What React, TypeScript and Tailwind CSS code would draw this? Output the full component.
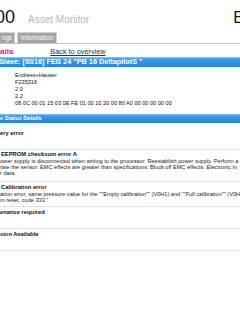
import React from 'react';

const FONT = { fontFamily: '"Liberation Sans", Arial, sans-serif' };

const deviceRows = [
  'Endress+Hauser',
  'F235316',
  '2.0',
  '2.2',
  '08 0C 00 01 15 03 0E FE 01 00 10 20 00 80 A0 00 00 00 00 00',
];

type StatusItem = {
  title: string;
  lines: string[];
  className: string;
};

const statusItems: StatusItem[] = [
  { title: 'ery error', lines: [], className: 'h-[27px] pt-[7px]' },
  {
    title: 'EEPROM checksum error A',
    lines: [
      'ower supply is disconnected when writing to the processor: Reestablish power supply. Perform a',
      'rate the sensor. EMC effects are greater than specifications: Block off EMC effects. Electronic in',
      'r data.',
    ],
    className: 'h-[32px] pt-[1px] pl-[1px]',
  },
  {
    title: 'Calibration error',
    lines: [
      'ation error, same pressure value for the ""Empty calibration"" (V0H1) and ""Full calibration"" (V0H',
      'm reset, code 333."',
    ],
    className: 'h-[25px] pt-[2px] pl-[1px]',
  },
  { title: 'enance required', lines: [], className: 'h-[22px] pt-[2px]' },
  { title: 'sion Available', lines: [], className: 'h-[22px] pt-[2px]' },
];

const BlueBar: React.FC<{ className: string; children: React.ReactNode }> = ({ className, children }) => (
  <div
    className={`whitespace-nowrap font-bold text-white bg-[linear-gradient(to_bottom,#84c4f4_0%,#3c98e7_25%,#2585da_100%)] ${className}`}
  >
    {children}
  </div>
);

export default function App() {
  return (
    <div className="w-[240px] h-[321px] overflow-hidden bg-white text-black" style={FONT}>
      {/* header, page is scrolled so the edges are cut */}
      <div className="h-[32px] flex items-baseline pt-[8px]">
        <span className="text-[18px] leading-[18px] -ml-[5px] text-[#111]">00</span>
        <span className="ml-[13px] text-[10px] leading-[10px] text-[#aeb7c6]">Asset Monitor</span>
        <span className="ml-auto -mr-[4px] text-[16px] leading-[16px] text-[#111]">E</span>
      </div>

      {/* tabs */}
      <div className="h-[12px] flex items-end gap-[2px] border-b border-[#c6c6c6]">
        <div className="h-[11px] w-[15px] bg-[#a4a4a4] border border-l-0 border-b-0 border-[#d2d2d2] text-white text-[6.5px] leading-[10px] text-right pr-[2px] whitespace-nowrap">
          ngs
        </div>
        <div className="h-[11px] w-[40px] bg-[#a4a4a4] border border-b-0 border-[#d2d2d2] text-white text-[6.5px] leading-[10px] text-center whitespace-nowrap">
          Information
        </div>
      </div>

      {/* nav row */}
      <div className="h-[13px] flex items-baseline pt-[1px] whitespace-nowrap">
        <span className="text-[8px] leading-[13px] font-bold text-[#d4168e]">ails</span>
        <span className="ml-[37px] text-[7.3px] leading-[13px] text-[#333] underline">Back to overview</span>
      </div>

      <BlueBar className="h-[10px] text-[7.3px] leading-[10px] -ml-[1px]">
        Slave: [S016] FEB 24 "PB 16 DeltapilotS "
      </BlueBar>

      {/* device values */}
      <div className="pt-[4.5px] pl-[15px] h-[47px]">
        {deviceRows.map((v) => (
          <div key={v} className="text-[5.6px] leading-[7px] whitespace-nowrap text-[#111]">
            {v}
          </div>
        ))}
      </div>

      <BlueBar className="h-[9px] text-[5.6px] leading-[9px]">e Status Details</BlueBar>

      {/* status list */}
      <div>
        {statusItems.map((item) => (
          <div key={item.title} className={`border-b border-[#e2e2e2] whitespace-nowrap ${item.className}`}>
            <div className="text-[5.8px] leading-[6px] font-bold text-[#111]">{item.title}</div>
            {item.lines.length > 0 && (
              <div className="mt-[1px] -ml-[1px]">
                {item.lines.map((l) => (
                  <div key={l} className="text-[5.6px] leading-[6px] text-[#222]">
                    {l}
                  </div>
                ))}
              </div>
            )}
          </div>
        ))}
      </div>
    </div>
  );
}
